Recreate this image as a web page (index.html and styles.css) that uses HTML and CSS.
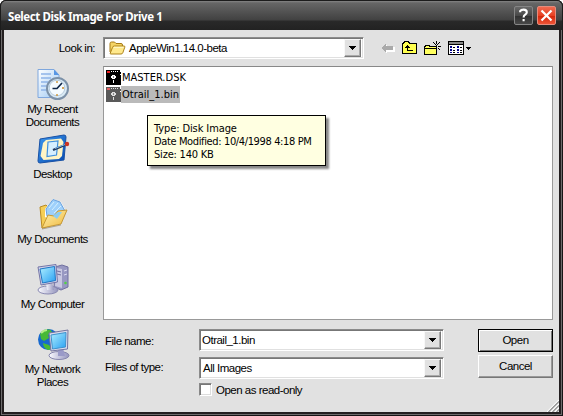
FILE: index.html
```html
<!DOCTYPE html>
<html lang="en">
<head>
<meta charset="utf-8">
<title>Select Disk Image For Drive 1</title>
<link rel="stylesheet" href="styles.css">
</head>
<body>
<div class="window">
  <header class="titlebar">
    <h1 class="title">Select Disk Image For Drive 1</h1>
    <button class="cap help" aria-label="Help"><svg width="19" height="19" viewBox="0 0 19 19"><path d="M6.2 6.2V5Q7 3.6 9.6 3.6Q12.8 3.6 12.8 6.2Q12.8 7.6 11.2 8.6Q9.6 9.6 9.6 11.5M9.6 13v2.2" fill="none" stroke="#fff" stroke-width="2.1"/></svg></button>
    <button class="cap close" aria-label="Close"><svg width="19" height="19" viewBox="0 0 19 19"><path d="M4.5 4.5L14.5 14.5M14.5 4.5L4.5 14.5" stroke="#fff" stroke-width="2.2"/></svg></button>
  </header>
  <main class="dialog">
    <div class="lookrow">
      <label class="looklabel">Look in:</label>
      <div class="combo lookin">
        <svg class="folder" width="17" height="14" viewBox="0 0 17 14"><path d="M1 11V2.5Q1 1 2.5 1H5.5L7 2.5H12Q13.5 2.5 13.5 4V5" fill="#f5d465" stroke="#a67b16"/><path d="M1.2 12.3L3.5 6.5Q3.8 5 5.5 5H15Q16.2 5 15.8 6.2L13.8 11.8Q13.4 13 12 13H2Q.8 13 1.2 12.3Z" fill="#ffe98d" stroke="#ad821b"/><path d="M5 6.3H14.5" stroke="#fff9ce"/></svg>
        <span class="value">AppleWin1.14.0-beta</span>
        <span class="drop"><svg width="7" height="4" shape-rendering="crispEdges"><path d="M0 0H7V1H6V2H5V3H4V4H3V3H2V2H1V1H0Z"/></svg></span>
      </div>
      <div class="tools">
        <svg width="14" height="11" viewBox="0 0 14 11" shape-rendering="crispEdges"><path d="M1 6L6 1V4H14V9H6V11Z" fill="#fff"/><path d="M0 5L5 0V3H12V7H5V10Z" fill="#aaa"/></svg>
        <svg width="15" height="14" viewBox="0 0 15 14" shape-rendering="crispEdges"><path d="M.5 12.5V2.5H1.5V1.5H2.5V.5H6.5V1.5H7.5V2.5H14.5V12.5Z" fill="#ffff50" stroke="#000"/><path d="M5 4H6V5H7V6H8V7H6V9H11V10H5V7H3V6H4V5H5Z" fill="#000"/></svg>
        <svg width="17" height="15" viewBox="0 0 17 15" shape-rendering="crispEdges"><path d="M.5 13.5V5.5H1.5V4.5H5.5V5.5H12.5V13.5Z" fill="#ffff60" stroke="#000"/><path d="M1 7.5H12" stroke="#000"/><path d="M12 0h1v3h-1zM9 1h1v1h-1zM10 2h1v1h-1zM11 3h1v1h-1zM15 1h1v1h-1zM14 2h1v1h-1zM13 3h1v1h-1zM8 5h3v1h-3zM14 5h3v1h-3zM12 7h1v2h-1zM14 7h1v1h-1zM15 8h1v1h-1zM12 4h1v1h-1z"/></svg>
        <svg width="23" height="14" viewBox="0 0 23 14" shape-rendering="crispEdges"><path d="M.5 .5H15.5V13.5H.5Z" fill="#fff" stroke="#000"/><path d="M1 1H15V3H1Z" fill="#888"/><path d="M1 3.5H15" stroke="#000"/><path d="M2 5h2v2h-2zM2 8h2v2h-2zM2 11h2v1h-2zM9 5h2v2h-2zM9 8h2v2h-2zM9 11h2v1h-2z" fill="#00008b"/><path d="M5 6h2v1h-2zM5 9h2v1h-2zM5 11h2v1h-2zM12 6h2v1h-2zM12 9h2v1h-2zM12 11h2v1h-2z"/><path d="M18 6H23V7H22V8H21V9H20V8H19V7H18Z"/></svg>
      </div>
    </div>

    <div class="body">
      <nav class="places">
        <a class="place">
          <svg width="34" height="32" viewBox="0 0 34 32"><defs><linearGradient id="paper" x2="1" y2="1"><stop stop-color="#fff"/><stop offset="1" stop-color="#9cc8f4"/></linearGradient><linearGradient id="blue" x2="1" y2="1"><stop stop-color="#3c9af0"/><stop offset="1" stop-color="#0748ae"/></linearGradient><linearGradient id="gold" x2="1" y2="1"><stop stop-color="#fff3b5"/><stop offset="1" stop-color="#efb83b"/></linearGradient><linearGradient id="screen" x2="1" y2="1"><stop stop-color="#aff0ff"/><stop offset="1" stop-color="#289ff2"/></linearGradient><linearGradient id="metal" x2="1"><stop stop-color="#fafaff"/><stop offset="1" stop-color="#9494bd"/></linearGradient></defs><path d="M2 1.5H18L23 7V29.5H2Z" fill="url(#paper)" stroke="#7fa7dd"/><path d="M18 1.5V7H23Z" fill="#5796e4"/><path d="M5 6H15M5 10H15M5 14H12M5 18H11M5 22H11" stroke="#8eb4e8" stroke-width="1.5"/><circle cx="21.5" cy="20.5" r="10.5" fill="#d9eaf5" stroke="#7c91a8" stroke-width="2"/><circle cx="21" cy="20" r="7.8" fill="#f4fbff" stroke="#b7cbdc"/><path d="M26 15L21 20.5H16.5" fill="none" stroke="#102848" stroke-width="1.7"/><path d="M21 13v2M21 26v2M28 20h-2" stroke="#ca8b25" stroke-width="1.3"/></svg>
          <span>My Recent<br>Documents</span></a>
        <a class="place">
          <svg width="34" height="32" viewBox="0 0 34 32"><path d="M4 6L28 2Q30 2 30 4L28 27L4 30Q2 30 2 28Z" fill="url(#blue)" stroke="#1851a5"/><path d="M7 10L10 7L25 5.5L27.5 9L26 23L23 26L7.5 27L4.5 23Z" fill="#fff5c5"/><path d="M12 9L22 8L20.5 22L11 23.5Z" fill="#d5efff" stroke="#3e90de" stroke-width="1.2"/><path d="M17 17L29 12" stroke="#223a60" stroke-width="2.2"/><path d="M19 15.5L29 11.5" stroke="#83bae5"/><circle cx="31" cy="11" r="2.2" fill="#cc3421"/></svg>
          <span>Desktop</span></a>
        <a class="place">
          <svg width="34" height="32" viewBox="0 0 34 32"><path d="M4 9L10 7L13 10V28L6 30Z" fill="#f6ce55" stroke="#b98a22"/><path d="M9 11L17 1L25 4L30 13L18 24L9 19Z" fill="#fff"/><path d="M10 11L17 1.5L24 4L29 13L18 23L11 18Z" fill="#9ed0fb" stroke="#6ca2dc"/><path d="M13 10L18 4M16 12L22 5M18 15L25 8" stroke="#d4efff"/><path d="M6 30L12 17L18 18L22 13L31 12L25 26Z" fill="url(#gold)" stroke="#c69834"/><path d="M17 18L22 14L26 14L21 21Z" fill="#8dcdf2"/><path d="M6 31L25 27" stroke="#786841" stroke-opacity=".5"/></svg>
          <span>My Documents</span></a>
        <a class="place">
          <svg width="34" height="32" viewBox="0 0 34 32"><path d="M19 4L26 2L32 4V24L25 27L18 24Z" fill="#9898c2" stroke="#7070a0"/><path d="M20 5L26 6V25L19 23Z" fill="#c9c9e2"/><path d="M21 8l4 1M21 11l4 1" stroke="#6f6fa0"/><path d="M28 8l3-1M28 12l3-1" stroke="#dcdcf0"/><circle cx="29.5" cy="20" r="1.3" fill="#51d342"/><ellipse cx="12" cy="27" rx="10" ry="4" fill="url(#metal)" stroke="#8989b2"/><path d="M10 20L16 19L18 27H11Z" fill="url(#metal)"/><path d="M2 4L20 1.5L21.5 19L5 22Z" fill="#d1d2e9" stroke="#7475a7"/><path d="M4 6L18.5 3.5L19.5 17.5L6.5 20Z" fill="url(#screen)" stroke="#1f77c5"/></svg>
          <span>My Computer</span></a>
        <a class="place">
          <svg width="34" height="32" viewBox="0 0 34 32"><circle cx="12.5" cy="11.5" r="10.5" fill="#1769ce"/><path d="M4 6Q8 1 14 1.5L17 5L12 7L13 10L8 13L5 11ZM7 15L13 17L16 21L12 22Q7 20 7 15Z" fill="#48b936"/><path d="M5 5Q8 2 11 2" stroke="#b8ee86" stroke-width="2"/><ellipse cx="23" cy="27.5" rx="10" ry="4" fill="url(#metal)" stroke="#8686ae"/><path d="M22 20H27L29 28H22Z" fill="#9a9ac8"/><path d="M13 5L32 2L31.5 21L15 23Z" fill="#dadbed" stroke="#7475a0"/><path d="M15 7L30 4.5L29.5 19L16.5 21Z" fill="url(#screen)" stroke="#3f91cb"/></svg>
          <span>My Network<br>Places</span></a>
      </nav>

      <div class="content">
        <ul class="list">
          <li class="file"><svg class="disk" width="15" height="15" viewBox="0 0 15 15" shape-rendering="crispEdges"><path d="M0 0H14V2H15V4H14V5H15V15H0Z"/><path d="M1 1h3v2h-3z" fill="#f02020"/><path d="M5 1h1v1h-1zM7 1h1v1h-1zM9 1h1v1h-1zM11 1h1v1h-1zM6 5h3v1h-3zM5 6h5v2h-5zM6 8h3v1h-3zM7 10h1v3h-1z" fill="#fff"/><path d="M7 6h1v2h-1z" fill="#888"/></svg><span class="mname">MASTER.DSK</span></li>
          <li class="file selected"><svg class="disk" width="15" height="15" viewBox="0 0 15 15" shape-rendering="crispEdges"><path d="M0 0H14V2H15V4H14V5H15V15H0Z" fill="#595959"/><path d="M1 1h3v2h-3z" fill="#e56262"/><path d="M5 1h1v1h-1zM7 1h1v1h-1zM9 1h1v1h-1zM11 1h1v1h-1zM6 5h3v1h-3zM5 6h5v2h-5zM6 8h3v1h-3zM7 10h1v3h-1z" fill="#ddd"/><path d="M7 6h1v2h-1z" fill="#888"/></svg><span class="oname">Otrail_1.bin</span></li>
        </ul>
        <div class="form">
          <label class="fn">File name:</label>
          <div class="combo"><span class="value bin">Otrail_1.bin</span><span class="drop"><svg width="7" height="4" shape-rendering="crispEdges"><path d="M0 0H7V1H6V2H5V3H4V4H3V3H2V2H1V1H0Z"/></svg></span></div>
          <button class="btn default">Open</button>
          <label class="ft">Files of type:</label>
          <div class="combo type"><span class="value all">All Images</span><span class="drop"><svg width="7" height="4" shape-rendering="crispEdges"><path d="M0 0H7V1H6V2H5V3H4V4H3V3H2V2H1V1H0Z"/></svg></span></div>
          <button class="btn">Cancel</button>
          <div class="readonly"><span class="check"></span><span>Open as read-only</span></div>
        </div>
      </div>
    </div>
    <div class="tooltip"><div class="t1">Type: Disk Image</div><div class="t2">Date Modified: 10/4/1998 4:18 PM</div><div class="t3">Size: 140 KB</div></div>
    <svg class="grip" width="12" height="12" viewBox="0 0 12 12"><path d="M0 12L12 0M4 12L12 4M8 12L12 8" stroke="#fff" stroke-width="1.2"/><path d="M1.5 12L12 1.5M5.5 12L12 5.5M9.5 12L12 9.5" stroke="#8c8c8c" stroke-width="1.1"/></svg>
  </main>
</div>
</body>
</html>
```
FILE: styles.css
```css
* { box-sizing: border-box; }
body { margin: 0; background: #fff; overflow: hidden; font: 11.5px/13px "Liberation Sans", Arial, sans-serif; letter-spacing: -.5px; color: #000; }
.window { width: 563px; height: 416px; padding: 0 4px 4px; background: #231f20; border-radius: 6px 6px 0 0; box-shadow: inset 0 0 0 1px #171516, inset 0 0 0 2px #6d6b6c; overflow: hidden; }
.titlebar { height: 30px; margin: 0 -4px; padding: 6px 6px 0 7px; display: flex; gap: 4px; border: 1px solid #1c1c1c; border-bottom: 0; border-radius: 6px 6px 0 0; background: linear-gradient(#858585 0, #666 2px, #505050 12px, #414141 19px, #292929 20px, #222 29px); }
.title { flex: 1; margin: 2px 0 0; font: bold 11.5px/15px "Noto Sans", sans-serif; letter-spacing: -.42px; color: #fff; white-space: nowrap; }
.cap { width: 19px; height: 19px; margin-top: -1px; padding: 0; border: 1px solid #858585; border-radius: 2px; background: linear-gradient(#686868, #484848 50%, #303030 52%, #484848); }
.cap svg { display: block; margin: -1px; }
.close { border-color: #e58c7d; background: linear-gradient(#ef6a50, #e74123 50%, #d32408 52%, #ed5336); }
.dialog { position: relative; height: 382px; background: #e1e1e1; }
.lookrow { height: 36px; padding-top: 7px; display: flex; }
.looklabel { width: 99px; padding: 5px 8px 0 0; text-align: right; }
.combo { height: 22px; display: flex; align-items: center; border: 1px solid; border-color: #8b8b8b #fff #fff #8b8b8b; box-shadow: inset 1px 1px #777, inset -1px -1px #e0e0e0; background: #fff; padding: 2px; white-space: nowrap; }
.lookin { width: 261px; }
.folder { margin: 0 3px 0 3px; }
.value { flex: 1; }
.all { padding-left: 1px; }
.drop { width: 17px; height: 18px; display: grid; place-items: center; background: #e1e1e1; border: 1px solid; border-color: #f8f8f8 #777 #777 #f8f8f8; box-shadow: inset -1px -1px #aaa; }
.tools { display: flex; align-items: center; gap: 7px; margin-left: 17px; height: 22px; }
.body { display: flex; }
.places { width: 97px; margin-right: 2px; padding-top: 2px; }
.place { height: 65px; display: flex; flex-direction: column; align-items: center; text-align: center; gap: 3px; }
.place svg { margin-left: 0; flex: none; }
.content { width: 450px; }
.list { height: 254px; margin: 0; padding: 2px 1px; list-style: none; background: #fff; border: 1px solid #999; border-top-color: #888; font: 11px/16px "DejaVu Sans Condensed", sans-serif; letter-spacing: 0; }
.file { height: 17px; display: flex; align-items: center; }
.file span { padding: 0 1px; height: 17px; line-height: 17px; }
.disk { margin: -1px 0 0 1px; }
.selected span { background: #bababa; }
.form { display: grid; grid-template-columns: 96px 245px 75px; column-gap: 0; grid-template-rows: 26px 26px 20px; padding-top: 9px; }
.form label { padding: 6px 0 0 2px; }
.form .combo { width: 245px; }
.form .type { margin-top: 2px; }
.form .btn { margin-left: 34px; width: 75px; }
.btn { height: 23px; padding: 0; font: inherit; letter-spacing: inherit; background: #e1e1e1; border: 1px solid; border-color: #fff #777 #777 #fff; box-shadow: inset -1px -1px #999; }
.default { border-color: #000; box-shadow: inset 1px 1px #fff, inset -1px -1px #777; }
.readonly { grid-column: 2; display: flex; gap: 4px; padding-top: 2px; }
.readonly span + span { padding-top: 1px; }
.check { width: 13px; height: 13px; background: #fff; border: 1px solid; border-color: #888 #fff #fff #888; box-shadow: inset 1px 1px #777, inset -1px -1px #ddd; }
.tooltip { position: absolute; left: 143px; top: 85px; width: 179px; height: 51px; padding: 6px; background: #ffffe1; border: 1px solid #000; box-shadow: 3px 3px 2px #0007; font: 11px/13px "DejaVu Sans Condensed", sans-serif; letter-spacing: -.1px; white-space: nowrap; }
.t2 { letter-spacing: -.37px; }
.t3 { letter-spacing: -.2px; }
.grip { position: absolute; right: 0; bottom: 0; }
```
